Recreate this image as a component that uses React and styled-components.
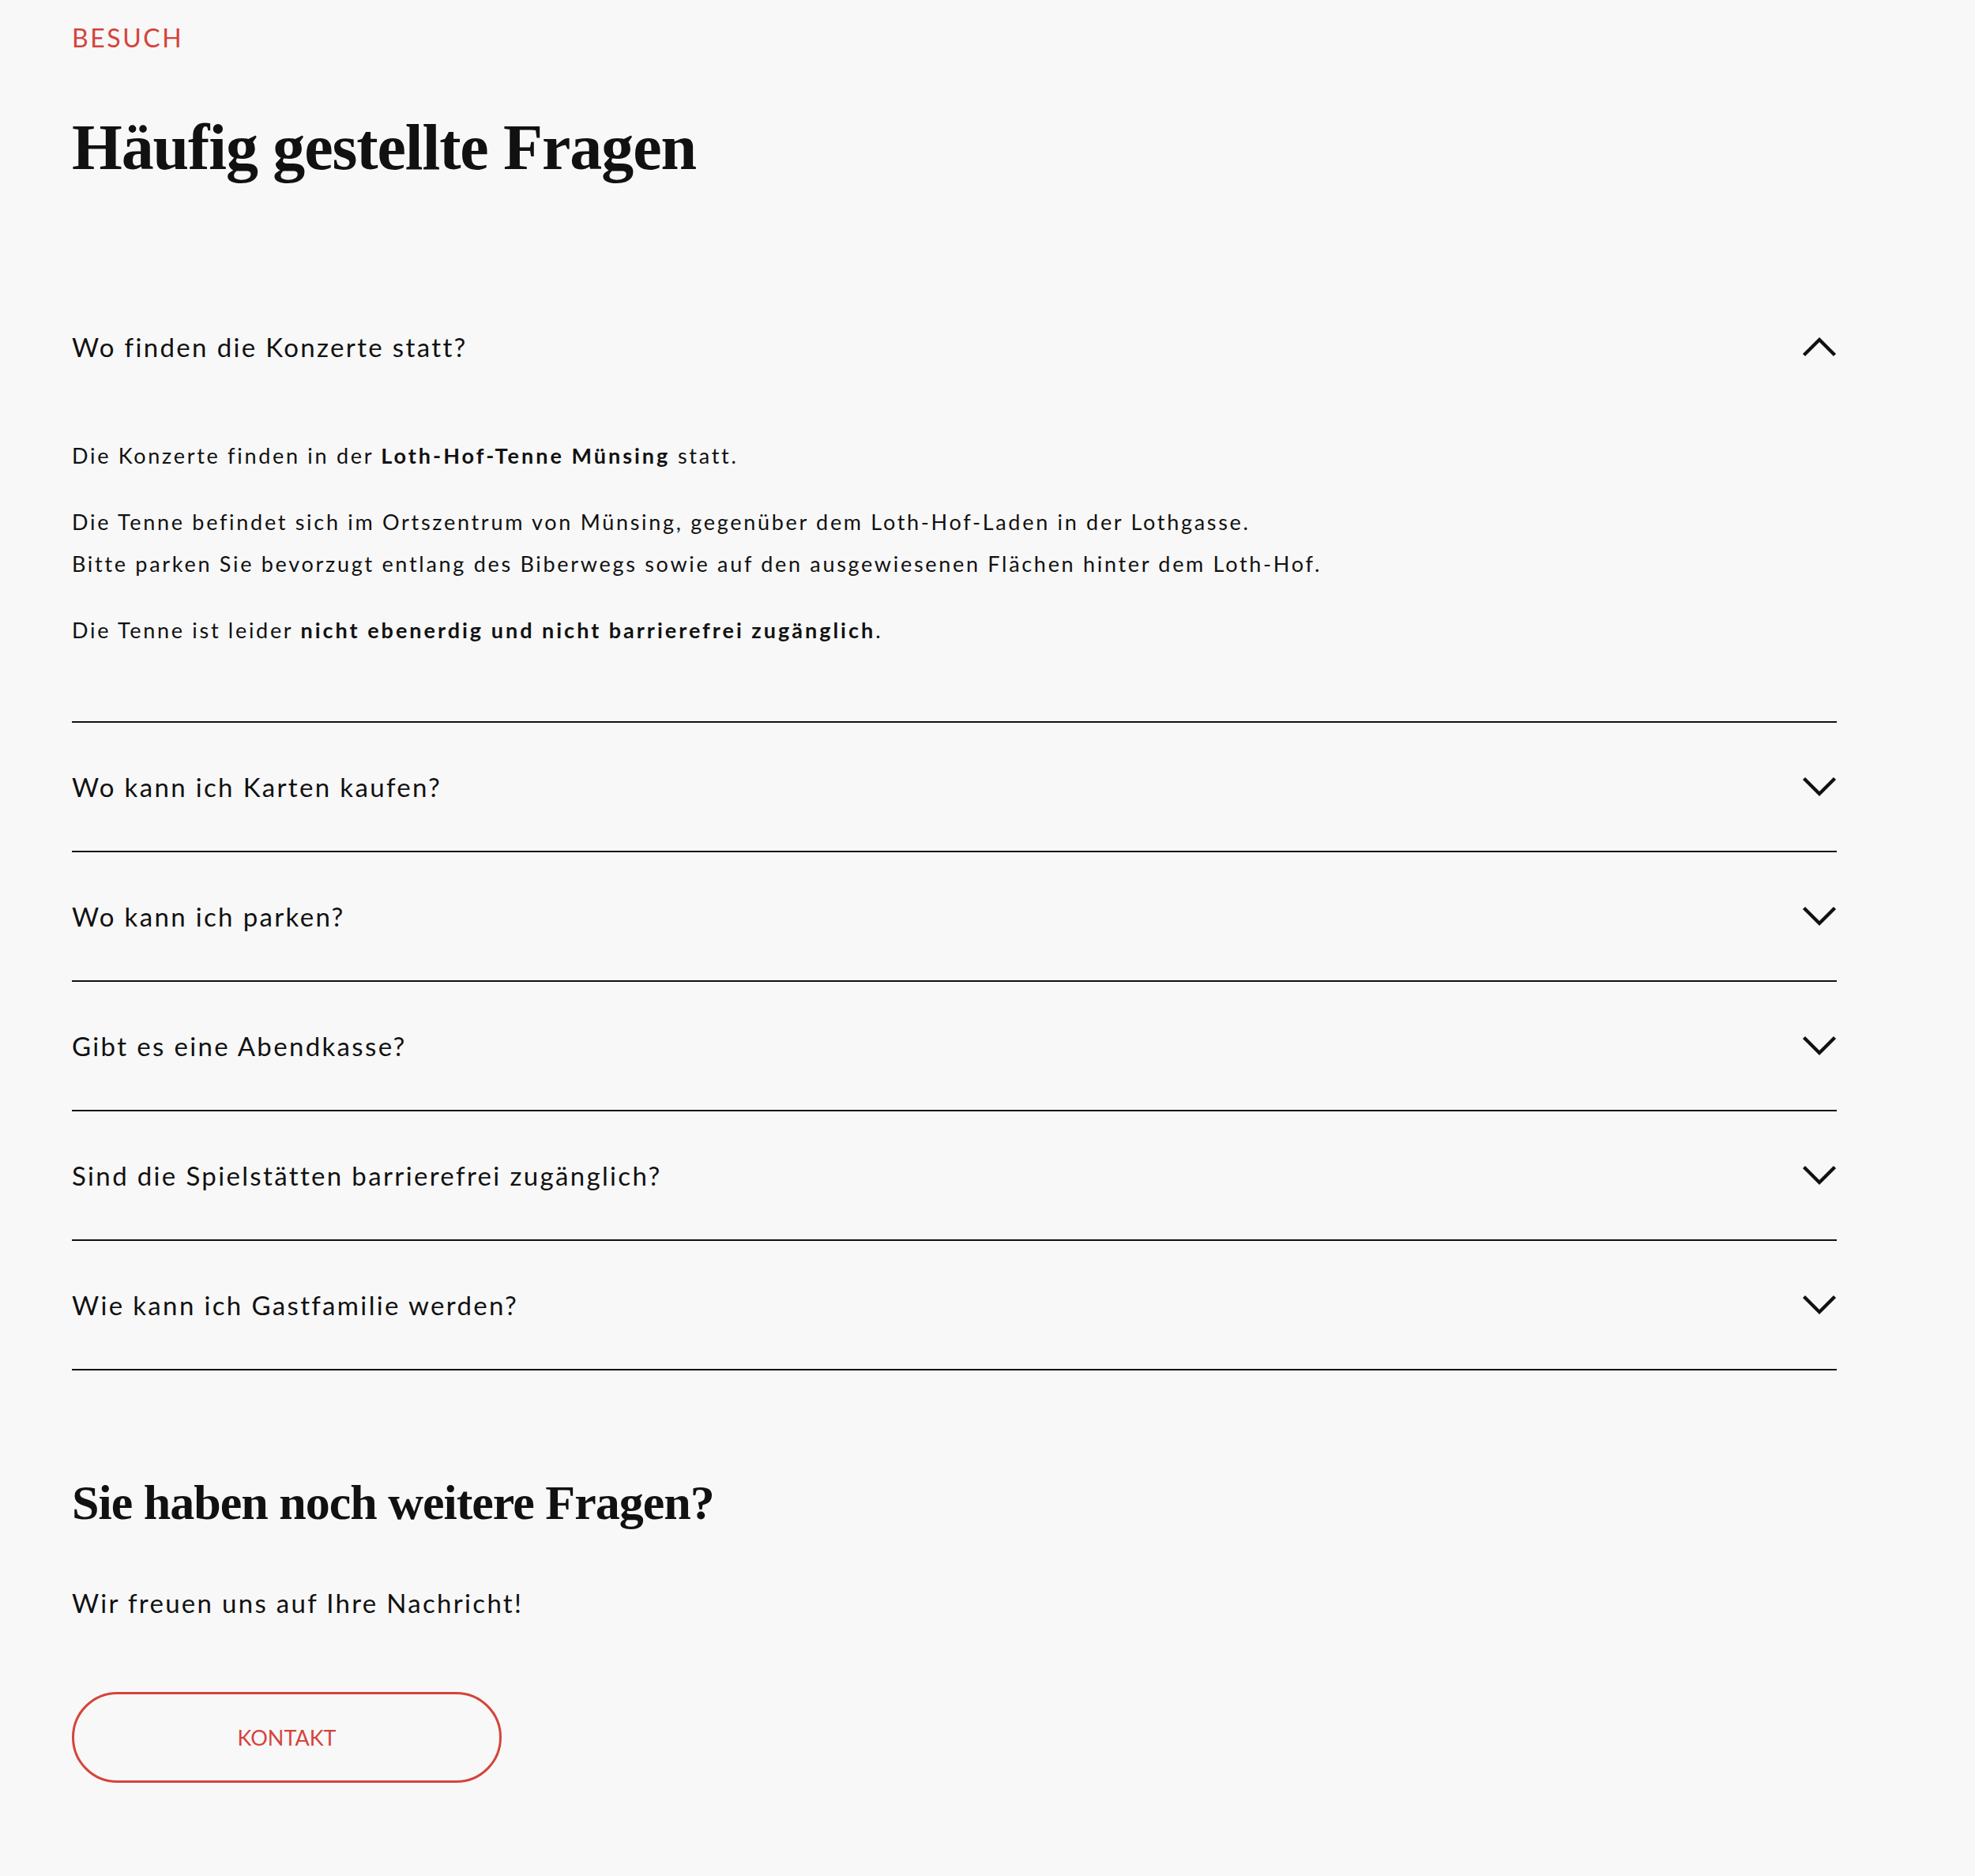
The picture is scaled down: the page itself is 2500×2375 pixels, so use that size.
import React, { useState } from "react";
import styled, { createGlobalStyle } from "styled-components";

const GlobalStyle = createGlobalStyle`
  html, body {
    margin: 0;
    padding: 0;
    background: #f8f8f8;
  }
  body {
    font-family: Lato, "Open Sans", sans-serif;
    color: #111;
  }
`;

const Page = styled.main`
  padding: 28px 0 120px 91px;
  width: 2234px;
`;

const Eyebrow = styled.div`
  font-size: 32px;
  line-height: 40px;
  letter-spacing: 0.08em;
  color: #d6433b;
  text-transform: uppercase;
`;

const Title = styled.h1`
  margin: 78px 0 0;
  font-family: "Liberation Serif", serif;
  font-weight: 700;
  font-size: 82px;
  line-height: 1;
  letter-spacing: -1.1px;
`;

const List = styled.div`
  margin-top: 130px;
`;

const Item = styled.div`
  border-bottom: 2px solid #111;
`;

const Question = styled.button`
  width: 100%;
  height: 162px;
  padding: 0;
  border: none;
  background: none;
  display: flex;
  align-items: center;
  justify-content: space-between;
  font-family: Lato, sans-serif;
  font-size: 33px;
  line-height: 40px;
  letter-spacing: 2.35px;
  color: #111;
  text-align: left;
  cursor: pointer;
`;

const Chevron = styled.svg`
  flex: none;
  width: 44px;
  height: 26px;
  transform: ${(p) => (p.$open ? "none" : "rotate(180deg)")};
`;

const Answer = styled.div`
  padding: 30px 0 89px;
  font-size: 27px;
  line-height: 53px;
  letter-spacing: 2.7px;

  p {
    margin: 0 0 31px;
  }
  p:last-child {
    margin-bottom: 0;
  }
  b {
    font-weight: 700;
    letter-spacing: 3px;
  }
`;

const SubTitle = styled.h2`
  margin: 136px 0 0;
  font-family: "Liberation Serif", serif;
  font-weight: 700;
  font-size: 62px;
  line-height: 1;
  letter-spacing: -1px;
`;

const Lead = styled.p`
  margin: 76px 0 0;
  font-size: 33px;
  line-height: 40px;
  letter-spacing: 2.3px;
`;

const Button = styled.a`
  margin-top: 93px;
  box-sizing: border-box;
  width: 544px;
  height: 115px;
  display: flex;
  align-items: center;
  justify-content: center;
  border: 3px solid #d6433b;
  border-radius: 58px;
  color: #d6433b;
  font-size: 27px;
  letter-spacing: 0;
  text-transform: uppercase;
  text-decoration: none;
`;

const faqs = [
  {
    q: "Wo finden die Konzerte statt?",
    a: (
      <>
        <p>
          Die Konzerte finden in der <b>Loth-Hof-Tenne Münsing</b> statt.
        </p>
        <p>
          Die Tenne befindet sich im Ortszentrum von Münsing, gegenüber dem Loth-Hof-Laden in der Lothgasse.
          <br />
          Bitte parken Sie bevorzugt entlang des Biberwegs sowie auf den ausgewiesenen Flächen hinter dem Loth-Hof.
        </p>
        <p>
          Die Tenne ist leider <b>nicht ebenerdig und nicht barrierefrei zugänglich</b>.
        </p>
      </>
    ),
  },
  { q: "Wo kann ich Karten kaufen?" },
  { q: "Wo kann ich parken?" },
  { q: "Gibt es eine Abendkasse?" },
  { q: "Sind die Spielstätten barrierefrei zugänglich?" },
  { q: "Wie kann ich Gastfamilie werden?" },
];

function FaqItem({ q, a, open, onToggle }) {
  return (
    <Item>
      <Question onClick={onToggle}>
        <span>{q}</span>
        <Chevron $open={open} viewBox="0 0 44 26" fill="none">
          <polyline points="2.5,23.5 22,4 41.5,23.5" stroke="#111" strokeWidth="4.4" />
        </Chevron>
      </Question>
      {open && a && <Answer>{a}</Answer>}
    </Item>
  );
}

export default function App() {
  const [open, setOpen] = useState(0);
  return (
    <>
      <GlobalStyle />
      <Page>
        <Eyebrow>Besuch</Eyebrow>
        <Title>Häufig gestellte Fragen</Title>
        <List>
          {faqs.map((f, i) => (
            <FaqItem
              key={f.q}
              q={f.q}
              a={f.a}
              open={open === i}
              onToggle={() => setOpen(open === i ? -1 : i)}
            />
          ))}
        </List>
        <SubTitle>Sie haben noch weitere Fragen?</SubTitle>
        <Lead>Wir freuen uns auf Ihre Nachricht!</Lead>
        <Button href="#kontakt">Kontakt</Button>
      </Page>
    </>
  );
}
